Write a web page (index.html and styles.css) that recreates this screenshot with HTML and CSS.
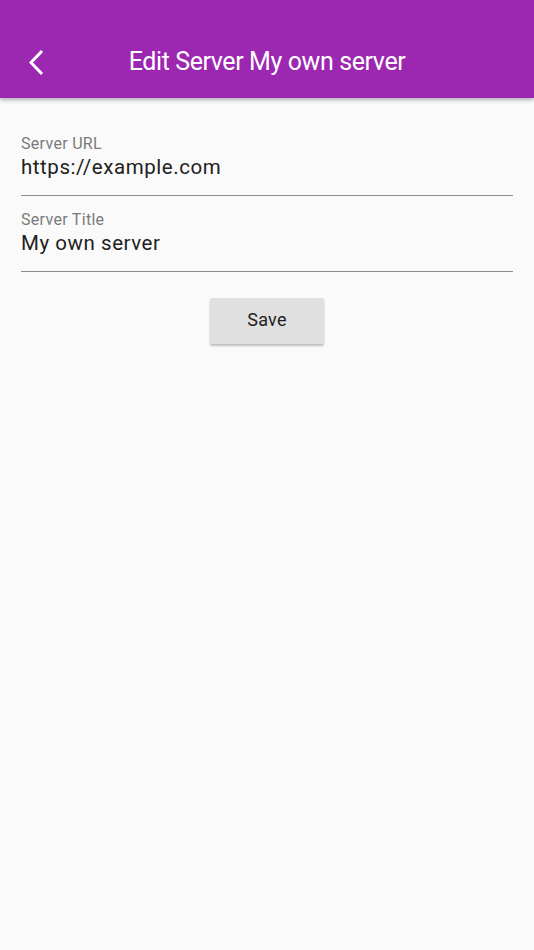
FILE: index.html
```html
<!DOCTYPE html>
<html>
<head>
<meta charset="utf-8">
<link rel="stylesheet" href="styles.css">
</head>
<body>
<header class="appbar">
  <button class="back" aria-label="Back">
    <svg width="20" height="28" viewBox="0 0 20 28"><path d="M16 2 L5 13.5 L16 25" fill="none" stroke="#fff" stroke-width="3"/></svg>
  </button>
  <h1 class="title">Edit Server My own server</h1>
</header>
<main class="content">
  <div class="field">
    <label class="label">Server URL</label>
    <div class="value">https://example.com</div>
  </div>
  <div class="field">
    <label class="label">Server Title</label>
    <div class="value">My own server</div>
  </div>
  <div class="actions">
    <button class="save">Save</button>
  </div>
</main>
</body>
</html>
```
FILE: styles.css
```css
html, body {
  margin: 0;
  padding: 0;
  height: 100%;
  background: #fafafa;
  font-family: Roboto, "Noto Sans", sans-serif;
}
.appbar {
  height: 98px;
  background: #9c27b0;
  box-shadow: 0 2px 4px rgba(0,0,0,0.3);
  display: flex;
  align-items: flex-end;
  box-sizing: border-box;
  padding-bottom: 21px;
}
.back {
  background: none;
  border: 0;
  padding: 0;
  margin-left: 26px;
  width: 20px;
  height: 28px;
  display: flex;
}
.title {
  flex: 1;
  margin: 0;
  text-align: center;
  color: #fff;
  font-size: 25px;
  font-weight: 400;
  letter-spacing: -0.4px;
  line-height: 30px;
  padding-right: 46px;
}
.content {
  padding: 0 21px;
}
.field {
  border-bottom: 1.5px solid #8e8e8e;
  padding-top: 15px;
  height: 60px;
}
.field:first-child {
  padding-top: 37px;
}
.label {
  display: block;
  font-size: 16px;
  color: #7a7a7a;
  line-height: 18px;
  letter-spacing: 0.3px;
}
.value {
  font-size: 20.5px;
  color: #212121;
  line-height: 28px;
  letter-spacing: 0.55px;
}
.actions {
  display: flex;
  justify-content: center;
  padding-top: 26px;
}
.save {
  width: 114px;
  height: 46px;
  border: 0;
  border-radius: 2px;
  background: #e0e0e0;
  box-shadow: 0 2px 2px rgba(0,0,0,0.24);
  font-family: Roboto, sans-serif;
  font-size: 18px;
  color: #1e1e1e;
  letter-spacing: 0.3px;
  padding: 0 0 3px 0;
}
```
